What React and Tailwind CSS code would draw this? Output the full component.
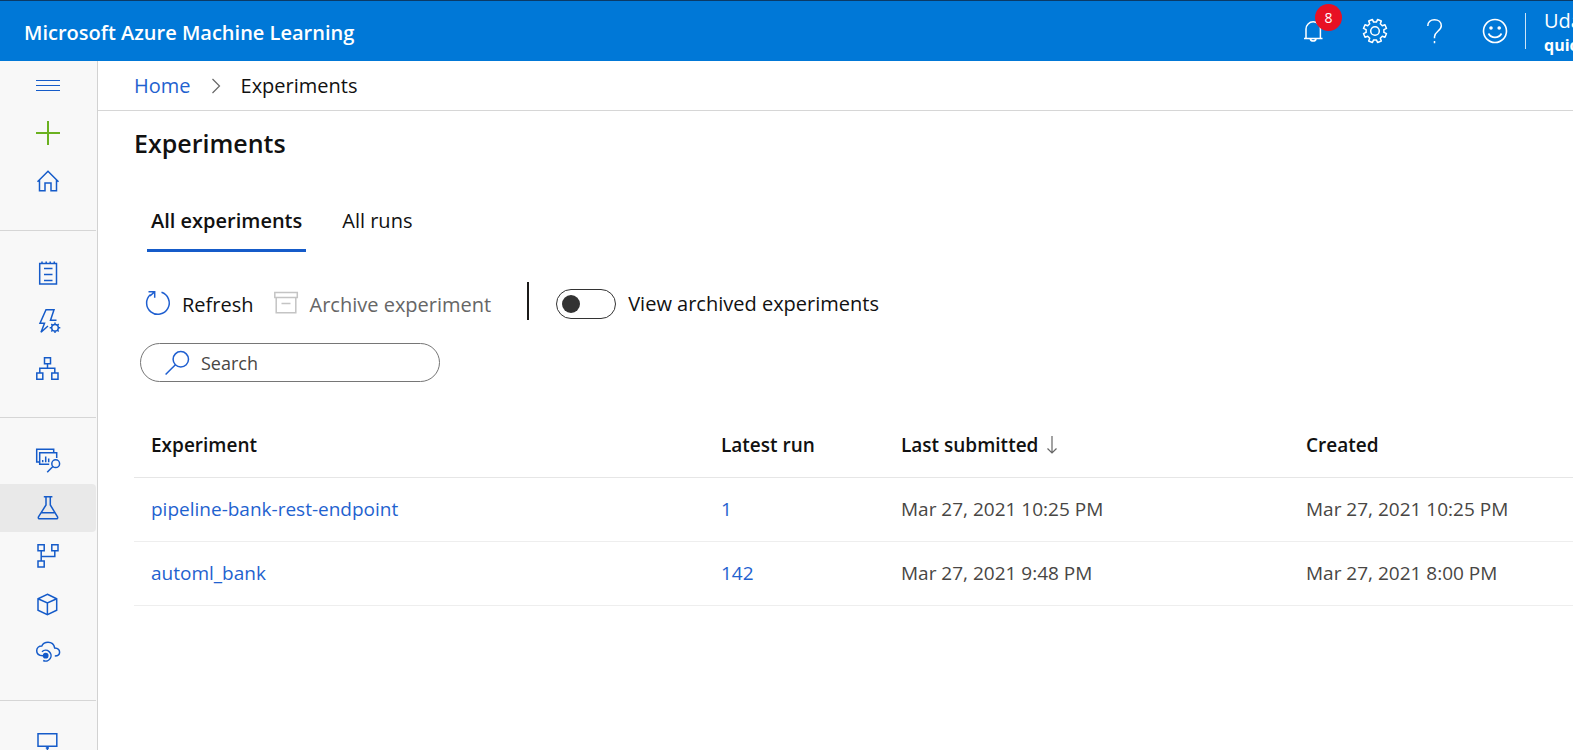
import React, { useState } from "react";

function Icon({ children, className = "size-6", width = 1.5 }) {
  return (
    <svg
      viewBox="0 0 24 24"
      className={`${className} shrink-0 overflow-visible`}
      fill="none"
      stroke="currentColor"
      strokeWidth={width}
      aria-hidden="true"
    >
      {children}
    </svg>
  );
}

/* Outline of a cog with `teeth` teeth between radii r1 and r2. */
function cog(cx, cy, r1, r2, teeth) {
  const pts = [];
  const step = (Math.PI * 2) / teeth;
  for (let i = 0; i < teeth; i++) {
    const a = i * step + step / 2;
    [
      [-0.3, r1],
      [-0.22, r2],
      [0.22, r2],
      [0.3, r1],
    ].forEach(([k, r]) => {
      const t = a + k * step;
      pts.push(`${(cx + r * Math.cos(t)).toFixed(2)} ${(cy + r * Math.sin(t)).toFixed(2)}`);
    });
  }
  return `M${pts.join("L")}Z`;
}

const icons = {
  menu: <path d="M0 7.5h24M0 12.5h24M0 17.5h24" strokeWidth="1" />,
  plus: <path d="M12 0v24M0 12h24" strokeWidth="2" />,
  home: <path d="M1.500 12.700 12 2.300l10.500 10.400M3.500 11V21.800H9V14h6v7.800h5.500V11" />,
  notebook: (
    <>
      <path d="M3.700 2.500h16.800v20.500H3.700zM8 7.500h8.500M8 13.500h8.500M8 19.500h8.500" />
      <path d="M6 .5v2M10.200 .5v2M14.200 .5v2M18.300 .5v2" />
    </>
  ),
  automl: (
    <>
      <path d="M20.500 11.200H14.500L18 .8H10L4 14.200h4.500L5 23.200 12 17" />
      <circle cx="19" cy="18.700" r="3.300" />
      <path
        d="M19 15.400v-2M19 22v2M15.700 18.700h-2M22.300 18.700h2M16.700 16.400l-1.400-1.400M21.300 16.400l1.400-1.400M16.700 21l-1.400 1.400M21.300 21l1.400 1.400"
        strokeWidth="1.400"
      />
    </>
  ),
  designer: (
    <path d="M8.500 .8h6v6h-6zM.8 16h6v6.200h-6zM15.800 16h6.200v6.200h-6.200zM11.500 6.800v4.500M3.800 16v-4.700h15V16" />
  ),
  datasets: (
    <>
      <path d="M17.700 4V1.300H.7V14h3" />
      <path d="M20.700 10V4.700h-17v11.600h9.500M6.700 14.300V12M9.700 14.300V8.500M12.700 14.300V10.500" />
      <circle cx="19.700" cy="15.700" r="3.900" />
      <path d="m16.900 18.500-5.700 5.800" />
    </>
  ),
  flask: (
    <path d="M7.800 .8h8.600M10 .8V9L2.500 20.800Q1.800 22.800 3.800 22.800H20.200Q22.200 22.800 21.500 20.800L14.300 9V.8M5.200 16.800H18.800" />
  ),
  pipelines: (
    <path d="M2 .8h6.200v6H2zM15.800 .8h6.200v6h-6.200zM2 17h6.200v6H2zM5.200 6.800V17M5.200 12.600h13.600V6.800" />
  ),
  cube: <path d="M11.400 2.300 20.700 6.700V18.300L11.400 22.700 2 18.300V6.700ZM2 6.700 11.400 11 20.700 6.700M11.400 11V22.700" />,
  cloud: (
    <>
      <path d="M9 15.700H6.800C2.500 15.700.7 13.500.7 10.800.7 7.800 3 6 5.800 6 7 3.500 9.300 2.300 12 2.300c3.500 0 6 2.200 6.700 5.700 3 .2 4.900 1.800 4.900 4.200 0 2.200-1.800 3.700-4.800 3.800" />
      <circle cx="9.700" cy="15.700" r="2.100" fill="currentColor" />
      <path d="M6 11.700a5.400 5.400 0 1 1 1.200 8.800" />
    </>
  ),
  monitor: <path d="M2 2.700h18.800V15.200H2zM11.400 15.200V21M9.800 17h3.200M6 21.500h11" />,
};

const groups = [
  [
    { icon: "menu", label: "Expand navigation" },
    { icon: "plus", label: "New", green: true },
    { icon: "home", label: "Home" },
  ],
  [
    { icon: "notebook", label: "Notebooks" },
    { icon: "automl", label: "Automated ML" },
    { icon: "designer", label: "Designer" },
  ],
  [
    { icon: "datasets", label: "Datasets" },
    { icon: "flask", label: "Experiments", active: true },
    { icon: "pipelines", label: "Pipelines" },
    { icon: "cube", label: "Models" },
    { icon: "cloud", label: "Endpoints" },
  ],
  [{ icon: "monitor", label: "Compute" }],
];

const rows = [
  { name: "pipeline-bank-rest-endpoint", run: "1", submitted: "Mar 27, 2021 10:25 PM", created: "Mar 27, 2021 10:25 PM" },
  { name: "automl_bank", run: "142", submitted: "Mar 27, 2021 9:48 PM", created: "Mar 27, 2021 8:00 PM" },
];

function Header() {
  return (
    <header className="flex h-[61px] shrink-0 items-center border-t border-[#0b3a66] bg-[#0078d7] pl-6 text-white">
      <div className="flex-1 pt-1 text-xl leading-7 font-semibold">Microsoft Azure Machine Learning</div>
      <div className="flex items-center">
        <button className="relative flex h-15 w-15 items-center justify-center pr-1" aria-label="Notifications">
          <Icon width={1.5}>
            <path d="M5 19.500V10a7.200 7.200 0 0 1 14.400 0v9.500M3 19.500h18.500M9.300 20a2.900 2.500 0 0 0 5.700 0" />
          </Icon>
          <span className="absolute top-[3px] left-[30px] flex size-[27px] items-center justify-center rounded-full bg-[#e81123] text-sm">
            8
          </span>
        </button>
        <button className="flex h-15 w-15 items-center justify-center" aria-label="Settings">
          <Icon width={1.5}>
            <path d={cog(12, 12, 9, 11.800, 8)} strokeLinejoin="round" />
            <circle cx="12" cy="12" r="4.300" />
          </Icon>
        </button>
        <button className="flex h-15 w-15 items-center justify-center" aria-label="Help">
          <Icon width={1.5}>
            <path d="M4.800 7C4.800 3 7.700.7 11.500.7s6.800 2.300 6.800 6c0 5.300-6.800 5.800-6.800 11v1.500M11.500 22v2.200" />
          </Icon>
        </button>
        <button className="flex h-15 w-15 items-center justify-center" aria-label="Feedback">
          <Icon width={1.6}>
            <circle cx="12" cy="12" r="11.500" />
            <circle cx="8" cy="9" r="1" fill="currentColor" />
            <circle cx="16.200" cy="9" r="1" fill="currentColor" />
            <path d="M5.500 14.500c2.800 5.200 10.200 5.200 13 0" />
          </Icon>
        </button>
      </div>
      <div className="h-9 w-px bg-white/80" />
      <div className="ml-[18px] w-[29px] overflow-hidden pt-1 whitespace-nowrap">
        <div className="text-xl leading-6">Uda</div>
        <div className="text-base leading-6 font-bold">quic</div>
      </div>
    </header>
  );
}

function Sidebar() {
  return (
    <nav aria-label="Workspace" className="w-[98px] shrink-0 overflow-hidden border-r border-[#d2d2d2] bg-[#f8f8f8]">
      {groups.map((items, g) => (
        <ul key={g} className={g ? "mr-px border-t border-[#d6d6d6] pt-[18px] pb-6" : "mr-px pb-[25px]"}>
          {items.map((it) => (
            <li key={it.label}>
              <a
                href="#"
                aria-label={it.label}
                className={`flex h-12 items-center justify-center ${it.active ? "rounded-r-sm bg-[#e9e9e9]" : ""} ${
                  it.green ? "text-[#6bb120]" : "text-[#155bc9]"
                }`}
              >
                <Icon>{icons[it.icon]}</Icon>
              </a>
            </li>
          ))}
        </ul>
      ))}
    </nav>
  );
}

function Toolbar() {
  const [archived, setArchived] = useState(false);
  return (
    <div className="mt-[30px] flex h-[38px] items-center pl-3 text-xl leading-7">
      <button className="flex items-center gap-3 pt-2">
        <span className="pb-1 text-[#1f5fd0]">
          <Icon>
            <path d="M15.500 1.300A11.300 11.300 0 1 1 4.500 3.500M2.500 .7h6.200v6M8.500 .9 4 5" />
          </Icon>
        </span>
        Refresh
      </button>
      <button disabled className="ml-5 flex items-center gap-3 pt-2 text-[#666]">
        <span className="pb-1 text-[#c4c4c4]">
          <Icon>
            <path d="M.8 1.500h22.500v5H.8zM2.200 6.500v15.300h19.600V6.500M7.500 12.500h9" />
          </Icon>
        </span>
        Archive experiment
      </button>
      <div className="ml-9 h-full w-0.5 bg-[#1b1a19]" />
      <label className="ml-[27px] flex items-center gap-3 pt-[6px]">
        <input
          type="checkbox"
          role="switch"
          checked={archived}
          onChange={(e) => setArchived(e.target.checked)}
          className="flex h-[30px] w-15 appearance-none items-center rounded-full border border-[#333] px-[5px] before:size-[18px] before:rounded-full before:bg-[#333] checked:justify-end"
        />
        View archived experiments
      </label>
    </div>
  );
}

function ExperimentTable() {
  const th = "pl-[17px] text-left font-semibold";
  const td = "pl-[17px]";
  return (
    <table className="mt-[31px] w-full table-fixed border-collapse text-[19px] leading-7 text-[#484644]">
      <colgroup>
        <col className="w-[570px]" />
        <col className="w-[180px]" />
        <col className="w-[405px]" />
        <col />
      </colgroup>
      <thead>
        <tr className="h-16 border-b border-[#e6e6e6] text-[#111]">
          <th className={th}>Experiment</th>
          <th className={th}>Latest run</th>
          <th className={th}>
            <span className="flex items-center gap-2">
              Last submitted
              <svg viewBox="0 0 12 20" className="h-5 w-3" fill="none" stroke="#666" strokeWidth="1.200" aria-hidden="true">
                <path d="M6 1v17M1.500 13.500 6 18l4.500-4.500" />
              </svg>
            </span>
          </th>
          <th className={th}>Created</th>
        </tr>
      </thead>
      <tbody>
        {rows.map((r) => (
          <tr key={r.name} className="h-16 border-b border-[#eeeeee]">
            <td className={td}>
              <a href="#" className="text-[#1f62cf]">{r.name}</a>
            </td>
            <td className={td}>
              <a href="#" className="text-[#1f62cf]">{r.run}</a>
            </td>
            <td className={td}>{r.submitted}</td>
            <td className={td}>{r.created}</td>
          </tr>
        ))}
      </tbody>
    </table>
  );
}

export default function App() {
  return (
    <div className="flex h-screen flex-col overflow-hidden bg-white font-['Open_Sans','Noto_Sans',sans-serif] text-[#111]">
      <Header />
      <div className="flex min-h-0 flex-1">
        <Sidebar />
        <main className="min-w-0 flex-1">
          <nav aria-label="Breadcrumb" className="flex h-[50px] items-center border-b border-[#d6d6d6] pl-9 text-xl leading-7">
            <a href="#" className="text-[#1f62cf]">Home</a>
            <svg viewBox="0 0 10 16" className="mx-5 h-4 w-[10px]" fill="none" stroke="#666" strokeWidth="1.200" aria-hidden="true">
              <path d="M1.500 1 8.500 8l-7 7" />
            </svg>
            <span>Experiments</span>
          </nav>
          <div className="pl-9">
            <h1 className="mt-3.5 text-[25px] leading-9 font-semibold">Experiments</h1>
            <div role="tablist" className="mt-[31px] flex gap-8 pl-[13px] text-xl leading-7">
              <button role="tab" aria-selected="true" className="border-b-[3px] border-[#155bc9] px-1 pt-[15px] pb-3.5 font-semibold">
                All experiments
              </button>
              <button role="tab" aria-selected="false" className="border-b-[3px] border-transparent px-1 pt-[15px] pb-3.5">
                All runs
              </button>
            </div>
            <Toolbar />
            <label className="mt-[23px] ml-1.5 flex h-[39px] w-[300px] items-center gap-3 rounded-full border border-[#767676] pl-6 text-lg">
              <span className="text-[#1f5fd0]">
                <Icon>
                  <circle cx="15.800" cy="8.300" r="7.700" />
                  <path d="M10.400 13.700.6 23.500" />
                </Icon>
              </span>
              <input
                type="search"
                aria-label="Search"
                placeholder="Search"
                className="min-w-0 flex-1 bg-transparent outline-none placeholder:text-[#484644]"
              />
            </label>
            <ExperimentTable />
          </div>
        </main>
      </div>
    </div>
  );
}
